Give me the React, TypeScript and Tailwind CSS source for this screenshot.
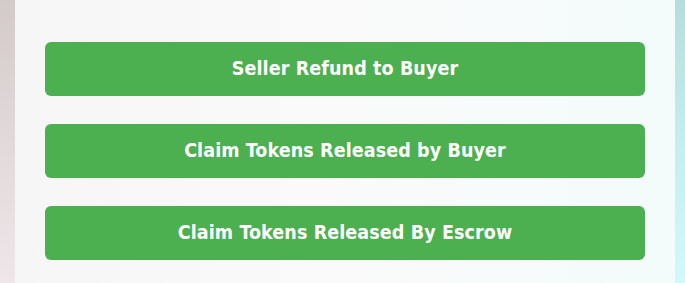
import React from "react";

const labels = [
  "Seller Refund to Buyer",
  "Claim Tokens Released by Buyer",
  "Claim Tokens Released By Escrow",
];

export default function App() {
  return (
    <div className="flex h-[283px] w-[685px] overflow-hidden">
      <div className="w-[15px] shrink-0 bg-gradient-to-b from-[#d3cbc9] via-[#e2d9da] to-[#efe6e9]" />
      <div className="flex w-[660px] shrink-0 flex-col gap-[28px] bg-gradient-to-r from-[#f7f6f7] via-[#fafafa] to-[#f3fbfb] px-[30px] pt-[42px]">
        {labels.map((l) => (
          <button
            key={l}
            className="flex h-[54px] w-[600px] items-center justify-center rounded-[6px] bg-[#4caf50] text-[19.5px] font-bold tracking-[0.1px] text-white"
            style={{ fontFamily: '"DejaVu Sans Condensed", "DejaVu Sans", sans-serif', fontStretch: "condensed" }}
          >
            {l}
          </button>
        ))}
      </div>
      <div className="w-[10px] shrink-0 bg-gradient-to-b from-[#b7dcdc] via-[#c6eeee] to-[#d3f8f9]" />
    </div>
  );
}
